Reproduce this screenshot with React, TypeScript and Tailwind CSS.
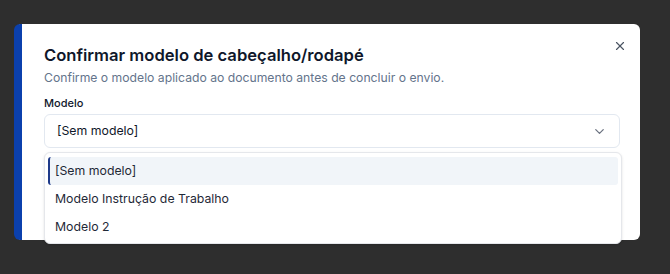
import { X, ChevronDown } from 'lucide-react';

const options = ['[Sem modelo]', 'Modelo Instrução de Trabalho', 'Modelo 2'];

export default function App() {
  return (
    <div
      className="h-[274px] w-[670px] overflow-hidden bg-[#2e2e2e] pl-[14px] pt-[24px]"
      style={{ fontFamily: 'Inter, "Noto Sans", sans-serif' }}
    >
      <div className="relative h-[216px] w-[626px] rounded-md border-l-[8px] border-[#0b40ad] bg-white pl-[22px] pr-[20px] pt-[19px]">
        <button className="absolute right-[13px] top-[15px] text-[#4b5563]">
          <X size={14} strokeWidth={2} />
        </button>

        <h2 className="text-[16.6px] font-semibold leading-[24px] text-[#0f172a]">
          Confirmar modelo de cabeçalho/rodapé
        </h2>
        <p className="mt-[1px] text-[12.2px] leading-[20px] text-[#64748b]">
          Confirme o modelo aplicado ao documento antes de concluir o envio.
        </p>

        <label className="mt-[8px] block text-[11px] font-medium leading-[14px] text-[#0f172a]">
          Modelo
        </label>

        <div className="relative mt-[4px] w-[576px]">
          <div className="flex h-[34px] items-center justify-between rounded-md border border-[#e2e8f0] bg-white pl-[12px] pr-[12px] text-[12.3px] text-[#0f172a]">
            <span>[Sem modelo]</span>
            <ChevronDown size={15} className="text-[#6b7280]" />
          </div>

          <div className="absolute left-0 top-[38px] z-10 w-[578px] rounded-md border border-[#e5e7eb] bg-white px-[3px] pb-[2px] pt-[4px] shadow-sm">
            {options.map((o, i) => (
              <div
                key={o}
                className={`flex h-[28px] items-center rounded-[3px] text-[12.3px] text-[#1f2937] ${
                  i === 0 ? 'border-l-2 border-[#1e3a8a] bg-[#f1f5f9] pl-[5px]' : 'pl-[7px]'
                }`}
              >
                {o}
              </div>
            ))}
          </div>
        </div>
      </div>
    </div>
  );
}
